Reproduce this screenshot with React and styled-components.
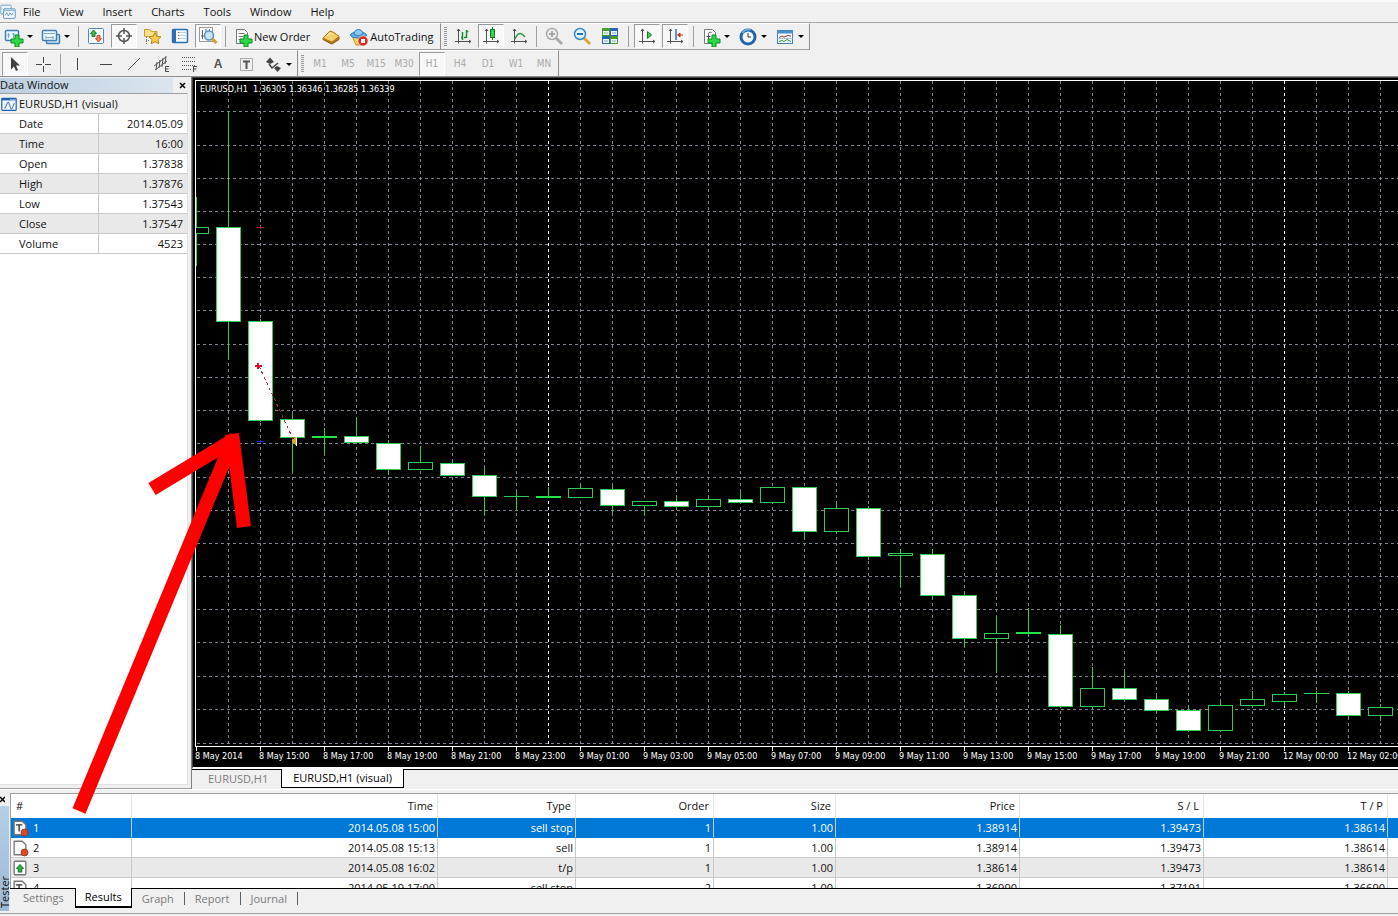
import React from "react";
import styled, { createGlobalStyle, css } from "styled-components";

const UI_FONT = '"Open Sans", "Noto Sans", sans-serif';
const CHART_FONT = '"DejaVu Sans Condensed", "DejaVu Sans", sans-serif';
const GREEN = "#2fcb58";

const MENU = ["File", "View", "Insert", "Charts", "Tools", "Window", "Help"];
const PERIODS = ["M1", "M5", "M15", "M30", "H1", "H4", "D1", "W1", "MN"];

const QUOTES = [
  ["Date", "2014.05.09"],
  ["Time", "16:00"],
  ["Open", "1.37838"],
  ["High", "1.37876"],
  ["Low", "1.37543"],
  ["Close", "1.37547"],
  ["Volume", "4523"],
];

const COLUMNS = [
  ["#", 121],
  ["Time", 306],
  ["Type", 138],
  ["Order", 138],
  ["Size", 122],
  ["Price", 184],
  ["S / L", 184],
  ["T / P", 184],
];

const ORDERS = [
  { icon: "pending", cells: ["1", "2014.05.08 15:00", "sell stop", "1", "1.00", "1.38914", "1.39473", "1.38614"] },
  { icon: "sell", cells: ["2", "2014.05.08 15:13", "sell", "1", "1.00", "1.38914", "1.39473", "1.38614"] },
  { icon: "profit", cells: ["3", "2014.05.08 16:02", "t/p", "1", "1.00", "1.38614", "1.39473", "1.38614"] },
  { icon: "pending", cells: ["4", "2014.05.19 17:00", "sell stop", "2", "1.00", "1.36990", "1.37191", "1.36690"] },
];

// body top, body bottom, wick top, wick bottom, kind (w = bear, h = bull, d = doji)
const CANDLES = [
  [227, 233, 197, 265, "h"],
  [227, 321, 111, 358, "w"],
  [321, 420, 319, 421, "w"],
  [419, 437, 414, 472, "w"],
  [436, 437, 428, 453, "d"],
  [436, 442, 417, 442, "w"],
  [443, 469, 440, 474, "w"],
  [462, 469, 446, 469, "h"],
  [463, 475, 460, 475, "w"],
  [475, 496, 468, 514, "w"],
  [496, 496, 492, 508, "d"],
  [496, 497, 487, 497, "d"],
  [488, 497, 484, 497, "h"],
  [489, 505, 486, 512, "w"],
  [501, 505, 501, 515, "h"],
  [501, 506, 495, 509, "w"],
  [499, 506, 495, 508, "h"],
  [499, 502, 492, 502, "w"],
  [487, 502, 487, 502, "h"],
  [487, 531, 487, 538, "w"],
  [508, 531, 503, 533, "h"],
  [508, 556, 506, 559, "w"],
  [553, 555, 549, 586, "h"],
  [554, 595, 549, 598, "w"],
  [595, 638, 591, 646, "w"],
  [633, 638, 616, 672, "h"],
  [632, 633, 608, 636, "d"],
  [634, 706, 625, 707, "w"],
  [688, 706, 667, 708, "h"],
  [688, 699, 672, 699, "w"],
  [699, 710, 696, 712, "w"],
  [710, 730, 705, 730, "w"],
  [705, 730, 702, 730, "h"],
  [699, 705, 691, 707, "h"],
  [694, 701, 692, 705, "h"],
  [693, 693, 691, 702, "d"],
  [693, 715, 691, 717, "w"],
  [707, 715, 704, 720, "h"],
];

const PRICE_LINES = [
  111, 145, 178, 211, 244, 277, 310, 344, 377, 410,
  443, 477, 510, 543, 576, 609, 642, 676, 709, 743,
];

const TIMES = [
  "8 May 2014", "8 May 15:00", "8 May 17:00", "8 May 19:00", "8 May 21:00",
  "8 May 23:00", "9 May 01:00", "9 May 03:00", "9 May 05:00", "9 May 07:00",
  "9 May 09:00", "9 May 11:00", "9 May 13:00", "9 May 15:00", "9 May 17:00",
  "9 May 19:00", "9 May 21:00", "12 May 00:00", "12 May 02:00",
];

const plus = (
  <path d="M11 8h4v4h4v4h-4v4h-4v-4H7v-4h4z" fill="#2fd845" stroke="#11892a" />
);

const axes = (
  <path d="M5.500 3v14.500M2 15.500h15.500M4 5l1.500-2L7 5M16 14l2 1.500-2 1.500" fill="none" stroke="#505050" />
);

const page = (
  <path d="M3.500 2.500h8l3 3v11h-11z" fill="#fbfbfb" stroke="#777" />
);

const ICONS = {
  app: (
    <>
      <rect x="1" y="1.500" width="13" height="11" rx="1" fill="#e8f3fb" stroke="#5f93bd" />
      <rect x="4.500" y="6" width="14.500" height="12" rx="1" fill="#f6fbff" stroke="#3f7fb5" />
      <path d="M4.500 8h14.500" stroke="#8fb8da" strokeWidth="2" />
      <path d="M6.500 14l2-3 2 4 2-4 2 3 2-3" fill="none" stroke="#4a87bd" />
    </>
  ),
  newChart: (
    <>
      <rect x="1.500" y="3.500" width="13" height="10" rx="1" fill="#eaf5fc" stroke="#3f7fb5" strokeWidth="1.500" />
      <path d="M4.500 6v5M3 8h3M9.500 6v5M8 7h3" stroke="#7ba7c9" />
      {plus}
    </>
  ),
  profiles: (
    <>
      <rect x="5.500" y="7.500" width="13" height="9" rx="1" fill="#cde2f2" stroke="#3f7fb5" strokeWidth="1.500" />
      <rect x="1.500" y="3.500" width="14" height="10" rx="1" fill="#f2f9fe" stroke="#3f7fb5" strokeWidth="1.500" />
      <path d="M3 6.500h11M5 10.500h8M5 9v3M12 9v3" stroke="#7ba7c9" />
    </>
  ),
  market: (
    <>
      <rect x="2.500" y="2.500" width="15" height="15" rx="1" fill="#f7fbfe" stroke="#4a8cc0" />
      <path d="M7.500 4l3 3.500H9v3H6v-3H4.500z" fill="#3fb950" stroke="#1d7d34" />
      <path d="M12.500 16l-3-3.500H11v-3h3v3h1.500z" fill="#f08060" stroke="#c8442c" />
    </>
  ),
  crosshair: (
    <g fill="none" stroke="#555" strokeWidth="1.500">
      <circle cx="10" cy="10" r="5.500" />
      <path d="M10 2v6M10 12v6M2 10h6M12 10h6" />
    </g>
  ),
  navigator: (
    <>
      <path d="M2.500 3.500h5l1.500 2h6v5h-12.500z" fill="#fbe28a" stroke="#c99d2e" />
      <path d="M4.500 11v7M4 14.500h3" stroke="#777" strokeDasharray="1 1" />
      <path d="M13 6.500l1.800 3.800 4.200.5-3.100 2.800.9 4.200-3.800-2.100-3.800 2.100.9-4.200L7 10.800l4.200-.5z" fill="#fccf4b" stroke="#b98418" />
    </>
  ),
  terminal: (
    <>
      <rect x="2.500" y="3.500" width="15" height="13" rx="1" fill="#f4faff" stroke="#2f6fae" strokeWidth="1.500" />
      <path d="M4.500 4v12" stroke="#2f6fae" strokeWidth="3" />
      <path d="M8 6.500h8M8 9.500h8M8 12.500h8" stroke="#b9d2e6" />
      <path d="M8 6.500h1M8 9.500h1M8 12.500h1" stroke="#c0392b" />
    </>
  ),
  tester: (
    <>
      <rect x="1.500" y="1.500" width="13" height="14" fill="#fafafa" stroke="#999" />
      <path d="M4.500 4v9M8 3v4M11.500 3v4M3 10h3" stroke="#666" />
      <circle cx="11" cy="9.500" r="4.500" fill="#bfe0f7" fillOpacity=".85" stroke="#5b93c4" strokeWidth="1.500" />
      <path d="M14.500 13l4 4" stroke="#d49d2c" strokeWidth="3" />
    </>
  ),
  order: (
    <>
      {page}
      <path d="M5.500 6.500h6M5.500 9.500h5M5.500 12.500h3" stroke="#777" />
      {plus}
    </>
  ),
  book: (
    <>
      <path d="M2 12l7-7c3 1 6 3 9 5.500v3L11 18c-3-1-6-3-9-4.500z" fill="#b97413" stroke="#8f5a12" />
      <path d="M2 12l7-7c3 1 6 3 9 5.500L11 16c-3-1-6-2.500-9-4z" fill="#f6cf6b" stroke="#b97d1c" />
      <path d="M6 10l3-3 4 2" fill="none" stroke="#fff0be" />
    </>
  ),
  autotrading: (
    <>
      <path d="M3 9l13 0-3 9H7z" fill="#f9d565" stroke="#c79322" />
      <ellipse cx="9.500" cy="8" rx="8" ry="3" fill="#63b1e5" stroke="#2d78b5" />
      <path d="M5 7c0-6 9-6 9 0-2 2-7 2-9 0z" fill="#8ccbf2" stroke="#2d78b5" />
      <circle cx="14" cy="14" r="5" fill="#d92c1d" stroke="#fff" strokeWidth=".5" />
      <rect x="12" y="12" width="4" height="4" fill="#fff" />
    </>
  ),
  bars: (
    <>
      {axes}
      <path d="M9.500 6v8M8 11.500h2M13.500 4v8M13 5.500h2.500M11 11.500h2" stroke="#1a8a2e" strokeWidth="1.500" />
    </>
  ),
  candles: (
    <>
      {axes}
      <path d="M11.500 1v13" stroke="#157a2a" />
      <rect x="9.500" y="3.500" width="4" height="8" fill="#35d44c" stroke="#157a2a" />
    </>
  ),
  line: (
    <>
      {axes}
      <path d="M6 13c3-7 6-7 10-2" fill="none" stroke="#2f9c42" strokeWidth="1.500" />
    </>
  ),
  zoomIn: (
    <>
      <path d="M12 12l6 6" stroke="#aaa" strokeWidth="3" />
      <circle cx="8" cy="8" r="5.500" fill="#eee" stroke="#aaa" strokeWidth="1.500" />
      <path d="M5 8h6M8 5v6" stroke="#999" strokeWidth="1.500" />
    </>
  ),
  zoomOut: (
    <>
      <path d="M12 12l6 6" stroke="#d9a73a" strokeWidth="3" />
      <circle cx="8" cy="8" r="5.500" fill="#e2f3fd" stroke="#3a87c2" strokeWidth="1.500" />
      <path d="M5 8h6" stroke="#2b6fae" strokeWidth="2" />
    </>
  ),
  tile: (
    <>
      <path d="M2 2h8v8H2zM10 10h8v8h-8z" fill="#4b9c2f" />
      <path d="M10 2h8v8h-8zM2 10h8v8H2z" fill="#2a66ad" />
      <path d="M3 5h6v4H3zM11 5h6v4h-6zM3 13h6v4H3zM11 13h6v4h-6z" fill="#eaf4fb" />
      <path d="M4 7h4M12 7h4M4 15h4M12 15h4" stroke="#8fa9b8" />
    </>
  ),
  autoscroll: (
    <>
      {axes}
      <path d="M10.500 5.500v7l4-3.500z" fill="#3ccf50" stroke="#157a2a" />
    </>
  ),
  shift: (
    <>
      {axes}
      <path d="M11 3v11" stroke="#2d76ab" strokeWidth="1.500" />
      <path d="M12.500 9l2.500-2v4zM14 9h4" fill="#c0321f" stroke="#c0321f" />
    </>
  ),
  indicators: (
    <>
      {page}
      <path d="M10.500 5.500c-3-1-3 1-3 3v5M5.500 9.500h4" fill="none" stroke="#444" />
      {plus}
    </>
  ),
  clock: (
    <>
      <circle cx="10" cy="10" r="7" fill="#f3f9fe" stroke="#1f62ad" strokeWidth="3" />
      <path d="M4.500 6a7 7 0 0 1 8-3" fill="none" stroke="#6fb3e6" strokeWidth="1.500" />
      <path d="M10 6v4h3" fill="none" stroke="#333" />
    </>
  ),
  templates: (
    <>
      <rect x="2.500" y="3.500" width="15" height="13" fill="#f7fcff" stroke="#3f7fb5" />
      <path d="M2 5h16" stroke="#4a8fc8" strokeWidth="3" />
      <path d="M4 10.500l3-1.500 2 1 4-1.500 3 .5" fill="none" stroke="#8f3b2f" />
      <path d="M2.500 11.500h15" stroke="#a5c4dc" />
      <path d="M4 14.500l3-1 2 1 3-2 4 2" fill="none" stroke="#2e9444" />
    </>
  ),
  cursor: <path d="M6 3v12.500l3-3 2 4.500 2-1-2-4.500h4z" fill="#404040" />,
  cross: <path d="M10.500 3v6M10.500 12v6M3 10.500h6M12 10.500h6" stroke="#444" />,
  vline: <path d="M9.500 4v12" stroke="#444" />,
  hline: <path d="M4 10.500h12" stroke="#444" />,
  trend: <path d="M4 16L16 4" stroke="#555" />,
  channel: (
    <>
      <path d="M2 12L14 3M3 16L15 7M5 8l-1 8M8 6l-1 8M11 4l-1 9M14 2l-1 8" stroke="#555" />
      <path d="M17 12.500h-3.500v5H17M13.500 15h3" fill="none" stroke="#444" />
    </>
  ),
  fibo: (
    <>
      <path d="M2 3.500h14M2 7.500h14M2 11.500h14M2 15.500h9" stroke="#555" strokeDasharray="1 1" />
      <path d="M17 12.500h-3.500v5.500M13.500 15h3" fill="none" stroke="#444" />
    </>
  ),
  label: (
    <>
      <rect x="4.500" y="4.500" width="12" height="12" fill="none" stroke="#666" strokeDasharray="1 1" />
      <path d="M7 7.500h7M10.500 7.500V15" stroke="#555" strokeWidth="2" />
    </>
  ),
  arrows: (
    <>
      <path d="M3 8l4-4.500L11 8l-4 2zM11 14l3-2 4 2-3.500 4z" fill="#444" />
      <path d="M6 10l3 4 6-5" fill="none" stroke="#444" strokeWidth="1.500" />
    </>
  ),
  series: (
    <>
      <rect x="1" y="3" width="18" height="15" rx="1" fill="#f4f9ff" stroke="#1d5fb8" strokeWidth="1.500" />
      <path d="M1 4h18" stroke="#1d5fb8" strokeWidth="3" />
      <path d="M12 4.500h1M14.500 4.500h1M17 4.500h1" stroke="#fff" strokeWidth="1.500" />
      <path d="M4 15c2 1 3-7 5-7s2 8 4 8 2-6 4-7" fill="none" stroke="#5b86c4" strokeWidth="1.500" />
    </>
  ),
  pending: (
    <>
      <path d="M3.500 2.500h9l4 4v11h-13z" fill="#fbfbfb" stroke="#777" strokeWidth="1.500" />
      <path d="M5.500 6.500h7M9 6.500V14" stroke="#333" strokeWidth="1.500" />
      <circle cx="15" cy="15" r="3.800" fill="#dd4a2a" stroke="#a92f18" />
    </>
  ),
  sell: (
    <>
      <path d="M3.500 2.500h9l4 4v11h-13z" fill="#fbfbfb" stroke="#777" strokeWidth="1.500" />
      <circle cx="15" cy="15" r="3.800" fill="#dd4a2a" stroke="#a92f18" />
    </>
  ),
  profit: (
    <>
      <rect x="3.500" y="2.500" width="13" height="15" rx="1" fill="#fbfbfb" stroke="#777" strokeWidth="1.500" />
      <path d="M10 6l4 4.500h-2v4H8v-4H6z" fill="#2fae45" stroke="#146b26" />
    </>
  ),
};

function Icon({ name, size = 20 }) {
  return (
    <svg width={size} height={size} viewBox="0 0 20 20" aria-hidden="true">
      {ICONS[name]}
    </svg>
  );
}

function Tool({ icon, label, pressed }) {
  return (
    <ToolButton type="button" aria-label={label} $pressed={pressed}>
      <Icon name={icon} />
    </ToolButton>
  );
}

function DropTool({ icon, label }) {
  return (
    <DropButton type="button" aria-label={label}>
      <Icon name={icon} />
      <Caret />
    </DropButton>
  );
}

function Candle({ x, data }) {
  const [top, bottom, high, low, kind] = data;
  if (kind === "d") {
    const thick = bottom > top;
    return (
      <g fill={thick ? "#1fe54b" : GREEN}>
        <rect x={x} y={high} width="1" height={low - high + 1} fill={GREEN} />
        <rect x={x - 12} y={top} width="25" height={bottom - top + 1} />
      </g>
    );
  }
  return (
    <g>
      <rect x={x} y={high} width="1" height={low - high + 1} fill={GREEN} />
      <rect x={x - 12 + 0.5} y={top + 0.5} width="24" height={bottom - top}
        fill={kind === "w" ? "#fff" : "#000"} stroke={GREEN} />
    </g>
  );
}

function Chart() {
  const columns = CANDLES.map((_, i) => 196 + i * 32);
  return (
    <ChartSvg role="img" aria-label="EURUSD hourly candlestick chart">
      <g transform="translate(-193 -78)">
        <g stroke="#7d8592" strokeDasharray="3 3">
          {PRICE_LINES.map((y) => (
            <line key={y} x1="197" x2="4000" y1={y + 0.5} y2={y + 0.5} />
          ))}
          {columns.slice(1).map((x) => (
            <line key={x} x1={x + 0.5} x2={x + 0.5} y1="81" y2="746"
              stroke={x === 548 || x === 1284 ? "#fff" : undefined} />
          ))}
        </g>
        {CANDLES.map((data, i) => (
          <Candle key={columns[i]} x={columns[i]} data={data} />
        ))}
        <rect x="193" y="78" width="2" height="670" />
        <path d="M4000 80.500H195.500V746.500H4000" fill="none" stroke="#fff" />
        <path d="M257 227.500h7M260.500 226v3" stroke="#b3262c" />
        <path d="M257 441.500h7M260.500 440v3" stroke="#2a2ac0" />
        <path d="M259 366L294 441" stroke="#c0202c" strokeDasharray="3 3" />
        <path d="M255 366h7M258 363v6" stroke="#d3122a" strokeWidth="2" />
        <path d="M296 436v10l-5-5z" fill="#e6a53a" />
        <path d="M296.500 437v9" stroke="#fff0c0" />
        <ChartText x="200" y="92" xmlSpace="preserve">
          {"EURUSD,H1  1.36305 1.36346 1.36285 1.36339"}
        </ChartText>
        {TIMES.map((time, i) => (
          <g key={time}>
            <rect x={196 + i * 64} y="747" width="1" height="4" fill="#fff" />
            <ChartText x={195 + i * 64} y="759">{time}</ChartText>
          </g>
        ))}
      </g>
    </ChartSvg>
  );
}

export default function App() {
  return (
    <Terminal>
      <GlobalStyle />
      <MenuBar>
        <Icon name="app" size={16} />
        {MENU.map((item) => (
          <MenuItem key={item} type="button">{item}</MenuItem>
        ))}
      </MenuBar>

      <ToolbarRow>
        <ToolGroup>
          <DropTool icon="newChart" label="New chart" />
          <DropTool icon="profiles" label="Profiles" />
          <Separator />
          <Tool icon="market" label="Market Watch" />
          <Tool icon="crosshair" label="Data Window" pressed />
          <Tool icon="navigator" label="Navigator" />
          <Tool icon="terminal" label="Terminal" />
          <Tool icon="tester" label="Strategy Tester" pressed />
          <Separator />
          <TextButton type="button"><Icon name="order" />New Order</TextButton>
          <Tool icon="book" label="MetaEditor" />
          <TextButton type="button"><Icon name="autotrading" />AutoTrading</TextButton>
        </ToolGroup>
        <ToolGroup>
          <Grip />
          <Tool icon="bars" label="Bar chart" />
          <Tool icon="candles" label="Candlesticks" pressed />
          <Tool icon="line" label="Line chart" />
          <Separator />
          <Tool icon="zoomIn" label="Zoom in" />
          <Tool icon="zoomOut" label="Zoom out" />
          <Tool icon="tile" label="Tile windows" />
          <Separator $wide />
          <Tool icon="autoscroll" label="Auto scroll" pressed />
          <Tool icon="shift" label="Chart shift" pressed />
          <Separator $wide />
          <DropTool icon="indicators" label="Indicators" />
          <DropTool icon="clock" label="Periods" />
          <DropTool icon="templates" label="Templates" />
        </ToolGroup>
      </ToolbarRow>

      <ToolbarRow $last>
        <ToolGroup>
          <Tool icon="cursor" label="Cursor" pressed />
          <Tool icon="cross" label="Crosshair" />
          <Separator />
          <Tool icon="vline" label="Vertical line" />
          <Tool icon="hline" label="Horizontal line" />
          <Tool icon="trend" label="Trendline" />
          <Tool icon="channel" label="Equidistant channel" />
          <Tool icon="fibo" label="Fibonacci" />
          <LetterButton type="button">A</LetterButton>
          <Tool icon="label" label="Text label" />
          <DropTool icon="arrows" label="Arrows" />
        </ToolGroup>
        <ToolGroup>
          <Grip />
          {PERIODS.map((period) => (
            <PeriodButton key={period} type="button" $pressed={period === "H1"}>
              {period}
            </PeriodButton>
          ))}
        </ToolGroup>
      </ToolbarRow>

      <Workspace>
        <DataWindow>
          <PanelTitle>
            <span>Data Window</span>
            <CloseButton type="button" aria-label="Close Data Window"><CloseMark /></CloseButton>
          </PanelTitle>
          <DataBody>
            <SeriesName><Icon name="series" size={16} />EURUSD,H1 (visual)</SeriesName>
            <QuoteTable>
              <tbody>
                {QUOTES.map(([name, value]) => (
                  <tr key={name}>
                    <th scope="row">{name}</th>
                    <td>{value}</td>
                  </tr>
                ))}
              </tbody>
            </QuoteTable>
          </DataBody>
        </DataWindow>

        <ChartArea>
          <ChartFrame><Chart /></ChartFrame>
          <ChartTabs>
            <ChartTab type="button">EURUSD,H1</ChartTab>
            <ChartTab type="button" $active>EURUSD,H1 (visual)</ChartTab>
          </ChartTabs>
        </ChartArea>
      </Workspace>

      <Tester>
        <TesterSide>
          <CloseButton type="button" aria-label="Close Tester"><CloseMark /></CloseButton>
          <TesterCaption>Tester</TesterCaption>
        </TesterSide>
        <TesterMain>
          <ResultsScroll>
            <ResultsTable>
              <colgroup>
                {COLUMNS.map(([name, width]) => <col key={name} width={width} />)}
                <col />
              </colgroup>
              <thead>
                <tr>
                  {COLUMNS.map(([name]) => <th key={name} scope="col">{name}</th>)}
                  <th aria-hidden="true" />
                </tr>
              </thead>
              <tbody>
                {ORDERS.map(({ icon, cells }, row) => (
                  <OrderRow key={cells[0]} $selected={row === 0}>
                    {cells.map((cell, i) => (
                      <td key={COLUMNS[i][0]}>
                        {i === 0 ? <OrderNumber><Icon name={icon} size={18} />{cell}</OrderNumber> : cell}
                      </td>
                    ))}
                    <td />
                  </OrderRow>
                ))}
              </tbody>
            </ResultsTable>
          </ResultsScroll>
          <TesterTabs>
            <TesterTab type="button">Settings</TesterTab>
            <TesterTab type="button" $active>Results</TesterTab>
            <TesterTab type="button" $divided>Graph</TesterTab>
            <TesterTab type="button" $divided>Report</TesterTab>
            <TesterTab type="button" $divided>Journal</TesterTab>
          </TesterTabs>
        </TesterMain>
      </Tester>

      <Annotation width="260" height="830" aria-hidden="true">
        <path d="M79 811L232 442M152 489L235 439M244 527L232 434" fill="none" stroke="#f00" strokeWidth="14" />
      </Annotation>
    </Terminal>
  );
}

const GlobalStyle = createGlobalStyle`
  * { box-sizing: border-box; }
  body {
    margin: 0;
    background: #f0f0f0;
    color: #111;
    font: 11px/16px ${UI_FONT};
  }
  button {
    margin: 0;
    padding: 0;
    border: 0;
    background: none;
    color: inherit;
    font: inherit;
  }
  svg { display: block; flex: none; }
`;

const Terminal = styled.div`
  position: relative;
  display: flex;
  flex-direction: column;
  min-height: 100vh;
  overflow: hidden;
`;

const MenuBar = styled.nav`
  display: flex;
  align-items: center;
  gap: 19px;
  height: 23px;
  border-top: 2px solid #fafafa;
  border-bottom: 1px solid #a8a8a8;

  svg { margin-right: -12px; }
`;

const MenuItem = styled.button`
  white-space: nowrap;
`;

const ToolGroup = styled.div`
  display: flex;
  border-top: 1px solid #fff;
  border-right: 1px solid #8f8f8f;
  border-bottom: 1px solid #a0a0a0;
  padding-left: 1px;

  & + & { padding-left: 0; }
`;

const ToolbarRow = styled.div`
  display: flex;
  height: 27px;
  ${({ $last }) => $last && css`
    height: 26px;
    ${ToolGroup} {
      padding-top: 1px;
      border-bottom: 0;
    }
  `}
`;

const pressedLook = css`
  border: 1px solid;
  border-color: #9a9a9a #fff #fff #9a9a9a;
  background: #f8f8f8;
`;

const ToolButton = styled.button`
  display: flex;
  align-items: center;
  justify-content: center;
  width: 26px;
  height: 24px;
  margin: 0 1px;
  ${({ $pressed }) => $pressed && pressedLook}
`;

const DropButton = styled.button`
  display: flex;
  align-items: center;
  width: 37px;
  padding-left: 3px;
  gap: 3px;
`;

const TextButton = styled.button`
  display: flex;
  align-items: center;
  gap: 1px;
  padding: 0 7px 0 4px;
  white-space: nowrap;
`;

const LetterButton = styled(ToolButton)`
  color: #505050;
  font: bold 12px/16px "Liberation Sans", sans-serif;
`;

const PeriodButton = styled(ToolButton)`
  color: #aaa;
  font: 10px/16px "DejaVu Sans Condensed", "DejaVu Sans", sans-serif;
`;

const Caret = styled.span`
  border: 3px solid transparent;
  border-top-color: #000;
  border-bottom: 0;
`;

const Separator = styled.span`
  width: 1px;
  margin: 2px ${({ $wide }) => ($wide ? "4px" : "3px")};
  background: #a0a0a0;
`;

const Grip = styled.span`
  width: 3px;
  margin: 3px 2px 3px 3px;
  background: repeating-linear-gradient(#9a9a9a 0 1px, #f0f0f0 1px 2px);
`;

const Workspace = styled.main`
  display: flex;
  flex: 1;
  min-height: 0;
  border-top: 1px solid #8c8c8c;
`;

const DataWindow = styled.section`
  display: flex;
  flex: none;
  flex-direction: column;
  width: 191px;
  padding-top: 1px;
  border-bottom: 1px solid #a0a0a0;
`;

const PanelTitle = styled.header`
  display: flex;
  justify-content: space-between;
  height: 15px;
  line-height: 14px;

  span:first-child {
    flex: 1;
    background: linear-gradient(90deg, #bccfe1, #dbe5ef);
  }
`;

const CloseButton = styled.button`
  display: flex;
  align-items: center;
  justify-content: center;
  width: 18px;
  height: 14px;
`;

function CloseMark() {
  return (
    <svg width="7" height="7" viewBox="0 0 7 7" aria-hidden="true">
      <path d="M1 1l5 5M6 1L1 6" stroke="#000" strokeWidth="1.500" />
    </svg>
  );
}

const DataBody = styled.div`
  flex: 1;
  margin: 0 3px 3px 0;
  border-top: 1px solid #a0a0a0;
  border-right: 1px solid #e0e0e0;
  border-bottom: 1px solid #e0e0e0;
  background: #fff;
`;

const SeriesName = styled.div`
  display: flex;
  align-items: center;
  gap: 2px;
  height: 20px;
  padding-left: 1px;
  border-bottom: 1px solid #c8c8c8;
  background: #f0f0f0;
`;

const QuoteTable = styled.table`
  width: 100%;
  border-spacing: 0;

  th, td {
    height: 20px;
    padding: 0;
    border-bottom: 1px solid #c8c8c8;
    font-weight: normal;
  }
  th {
    width: 99px;
    padding-left: 19px;
    border-right: 1px solid #c8c8c8;
    text-align: left;
  }
  td {
    padding-right: 4px;
    text-align: right;
  }
  tr:nth-child(even) { background: #e9e9e9; }
`;

const ChartArea = styled.section`
  display: flex;
  flex: 1;
  flex-direction: column;
  min-width: 0;
  border-left: 1px solid #808080;
`;

const ChartFrame = styled.div`
  flex: 1;
  min-height: 0;
  border-top: 1px solid #404040;
  border-left: 1px solid #404040;
  border-bottom: 2px solid #fff;
  background: #000;
`;

const ChartSvg = styled.svg`
  width: 100%;
  height: 100%;
  shape-rendering: crispEdges;
`;

const ChartText = styled.text`
  fill: #fff;
  font: 9px ${CHART_FONT};
  white-space: pre;
`;

const ChartTabs = styled.div`
  display: flex;
  height: 20px;
  border-top: 1px solid #000;
`;

const ChartTab = styled.button`
  height: 18px;
  padding: 0 13px 0 16px;
  color: #7a7a7a;
  white-space: nowrap;
  ${({ $active }) => $active && css`
    height: 19px;
    margin-top: -1px;
    padding: 0 11px;
    border: solid #000;
    border-width: 0 1px 1px;
    background: #fff;
    color: #000;
  `}
`;

const Tester = styled.section`
  display: flex;
  height: 125px;
  margin-bottom: 2px;
  padding: 3px 0 2px;
  border-top: 1px solid #fff;
  border-bottom: 1px solid #a0a0a0;
`;

const TesterSide = styled.div`
  display: flex;
  flex: none;
  flex-direction: column;
  width: 10px;

  ${CloseButton} {
    width: 5px;
    height: 13px;
    overflow: hidden;
  }
`;

const TesterCaption = styled.div`
  flex: 1;
  width: 9px;
  padding-top: 3px;
  background: linear-gradient(0deg, #b5cfe8, #9db9d3);
  line-height: 9px;
  writing-mode: vertical-rl;
  transform: rotate(180deg);
`;

const TesterMain = styled.div`
  display: flex;
  flex: 1;
  flex-direction: column;
  min-width: 0;
`;

const ResultsScroll = styled.div`
  flex: 1;
  min-height: 0;
  overflow: hidden;
  border-top: 1px solid #a0a0a0;
  border-left: 1px solid #a0a0a0;
  background: #fff;
`;

const ResultsTable = styled.table`
  width: 100%;
  border-spacing: 0;
  table-layout: fixed;

  th, td {
    height: 20px;
    padding: 0 2px 0 0;
    border-right: 1px solid #c8c8c8;
    border-bottom: 1px solid #c8c8c8;
    font-weight: normal;
    text-align: right;
    white-space: nowrap;
  }
  th {
    height: 24px;
    padding-right: 4px;
    border-right-color: #e4e4e4;
    border-bottom: 0;
  }
  th:first-child {
    padding-left: 5px;
    text-align: left;
  }
  th:last-child, td:last-child { border-right: 0; }
`;

const OrderRow = styled.tr`
  &:nth-child(odd) { background: #e9e9e9; }
  ${({ $selected }) => $selected && css`
    &&:nth-child(odd) {
      background: #0078d7;
      color: #fff;
    }
    && td { border-bottom-color: #0078d7; }
  `}
`;

const OrderNumber = styled.span`
  display: flex;
  align-items: center;
  gap: 4px;
`;

const TesterTabs = styled.div`
  display: flex;
  height: 23px;
  border-top: 1px solid #000;
`;

const TesterTab = styled.button`
  height: 18px;
  padding: 0 11px 0 13px;
  color: #7a7a7a;
  ${({ $divided }) => $divided && css`
    height: 13px;
    margin-top: 3px;
    padding: 0 10px;
    border-right: 1px solid #606060;
    line-height: 13px;
  `}
  ${({ $active }) => $active && css`
    height: 20px;
    margin-top: -1px;
    padding: 0 9px;
    border: solid #000;
    border-width: 0 1px 2px;
    background: #fff;
    color: #000;
  `}
`;

// hand-drawn marker laid over the panels
const Annotation = styled.svg`
  position: absolute;
  top: 0;
  left: 0;
  pointer-events: none;
`;
